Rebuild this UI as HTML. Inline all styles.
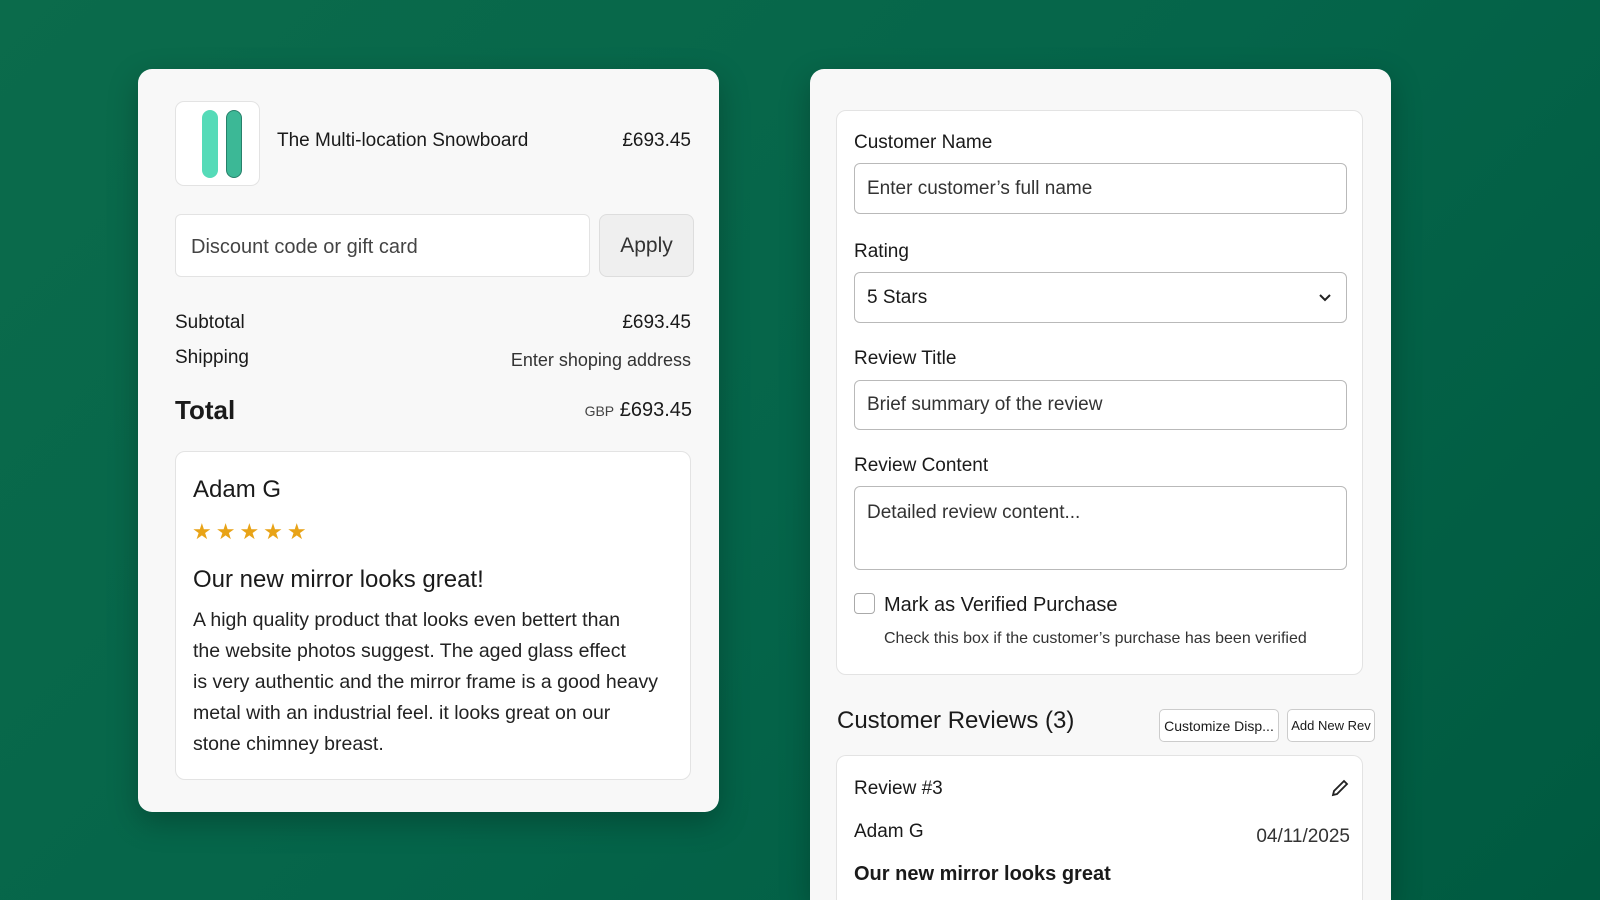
<!DOCTYPE html>
<html style="overflow:hidden;width:1600px;height:900px"><head><meta charset="utf-8"><style>
*{box-sizing:border-box;margin:0;padding:0}
body{width:1600px;height:900px;overflow:hidden;background:linear-gradient(135deg,#0b6b4b 0%,#05654a 50%,#005a40 100%);font-family:"Liberation Sans",sans-serif;color:#1a1a1a;position:relative}
.abs{position:absolute}
.card{position:absolute;background:#f8f8f8;border-radius:14px;box-shadow:0 10px 30px rgba(0,0,0,.25);overflow:hidden}
.box{position:absolute;background:#fff;border:1px solid #e3e3e3;border-radius:10px}
.t{position:absolute;white-space:nowrap}
.inp{position:absolute;background:#fff;border:1px solid #b9b9b9;border-radius:6px;font-size:19px;color:#333;padding-left:12px;display:flex;align-items:center}
.lbl{position:absolute;font-size:19px;color:#1a1a1a;white-space:nowrap}
</style></head><body>
<div class="card" style="left:138px;top:69px;width:581px;height:743px"></div>
<div class="box" style="left:175px;top:101px;width:85px;height:85px;border-radius:9px"></div>
<div class="abs" style="left:202px;top:110px;width:16px;height:68px;border-radius:8px;background:#55dbb8"></div>
<div class="abs" style="left:226px;top:110px;width:16px;height:68px;border-radius:8px;background:#3cb896;border:1px solid #27806a"></div>
<div class="t" style="left:277px;top:130px;font-size:19px">The Multi-location Snowboard</div>
<div class="t" style="right:909px;top:130px;font-size:19px">£693.45</div>
<div class="box" style="left:175px;top:214px;width:415px;height:63px;border-radius:6px"></div>
<div class="t" style="left:191px;top:236px;font-size:20px;color:#444">Discount code or gift card</div>
<div class="abs" style="left:599px;top:214px;width:95px;height:63px;border-radius:8px;background:#efefef;border:1px solid #ddd;font-size:21px;display:flex;align-items:center;justify-content:center;color:#333">Apply</div>
<div class="t" style="left:175px;top:312px;font-size:19px">Subtotal</div>
<div class="t" style="right:909px;top:312px;font-size:19px">£693.45</div>
<div class="t" style="left:175px;top:347px;font-size:19px">Shipping</div>
<div class="t" style="right:909px;top:350px;font-size:18px;color:#333">Enter shoping address</div>
<div class="t" style="left:175px;top:395px;font-size:26px;font-weight:bold">Total</div>
<div class="t" style="right:908px;top:399px;font-size:20px"><span style="font-size:14px;color:#444">GBP</span> £693.45</div>
<div class="box" style="left:175px;top:451px;width:516px;height:329px"></div>
<div class="t" style="left:193px;top:476px;font-size:24px">Adam G</div>
<div class="t" style="left:192px;top:519px;font-size:22px;color:#e8a317;letter-spacing:4px">★★★★★</div>
<div class="t" style="left:193px;top:566px;font-size:24px;font-weight:500">Our new mirror looks great!</div>
<div class="abs" style="left:193px;top:605px;width:490px;font-size:19.5px;line-height:31px;color:#222">A high quality product that looks even bettert than<br>the website photos suggest. The aged glass effect<br>is very authentic and the mirror frame is a good heavy<br>metal with an industrial feel. it looks great on our<br>stone chimney breast.</div>

<div class="card" style="left:810px;top:69px;width:581px;height:831px;border-radius:14px 14px 0 0">
<div class="box" style="left:26px;top:686px;width:527px;height:145px;border-radius:10px 10px 0 0;border-bottom:none"></div>
</div>
<div class="box" style="left:836px;top:110px;width:527px;height:565px"></div>
<div class="lbl" style="left:854px;top:132px">Customer Name</div>
<div class="inp" style="left:854px;top:163px;width:493px;height:51px">Enter customer’s full name</div>
<div class="lbl" style="left:854px;top:241px">Rating</div>
<div class="inp" style="left:854px;top:272px;width:493px;height:51px;color:#1a1a1a">5 Stars
<svg class="abs" style="right:14px;top:20px" width="14" height="10" viewBox="0 0 14 10"><path d="M2 2l5 5 5-5" fill="none" stroke="#222" stroke-width="2"/></svg></div>
<div class="lbl" style="left:854px;top:348px">Review Title</div>
<div class="inp" style="left:854px;top:380px;width:493px;height:50px">Brief summary of the review</div>
<div class="lbl" style="left:854px;top:455px">Review Content</div>
<div class="inp" style="left:854px;top:486px;width:493px;height:84px;align-items:flex-start;padding-top:15px">Detailed review content...</div>
<div class="abs" style="left:854px;top:593px;width:21px;height:21px;border:1.5px solid #aaa;border-radius:4px;background:#fff"></div>
<div class="t" style="left:884px;top:594px;font-size:20px">Mark as Verified Purchase</div>
<div class="t" style="left:884px;top:630px;font-size:16px;color:#333">Check this box if the customer’s purchase has been verified</div>
<div class="t" style="left:837px;top:707px;font-size:24px;font-weight:500">Customer Reviews (3)</div>
<div class="abs" style="left:1159px;top:709px;width:120px;height:33px;background:#fff;border:1px solid #ccc;border-radius:5px;font-size:14px;display:flex;align-items:center;justify-content:center">Customize Disp...</div>
<div class="abs" style="left:1287px;top:709px;width:88px;height:33px;background:#fff;border:1px solid #ccc;border-radius:5px;font-size:13px;display:flex;align-items:center;justify-content:center">Add New Rev</div>
<div class="t" style="left:854px;top:778px;font-size:19px">Review #3</div>
<svg class="abs" style="left:1330px;top:778px" width="20" height="20" viewBox="0 0 20 20"><path d="M3 17l1-4 10-10 3 3-10 10z" fill="none" stroke="#222" stroke-width="1.8"/></svg>
<div class="t" style="left:854px;top:821px;font-size:19px">Adam G</div>
<div class="t" style="right:250px;top:826px;font-size:19px;color:#333">04/11/2025</div>
<div class="t" style="left:854px;top:863px;font-size:20px;font-weight:bold">Our new mirror looks great</div>
</body></html>
